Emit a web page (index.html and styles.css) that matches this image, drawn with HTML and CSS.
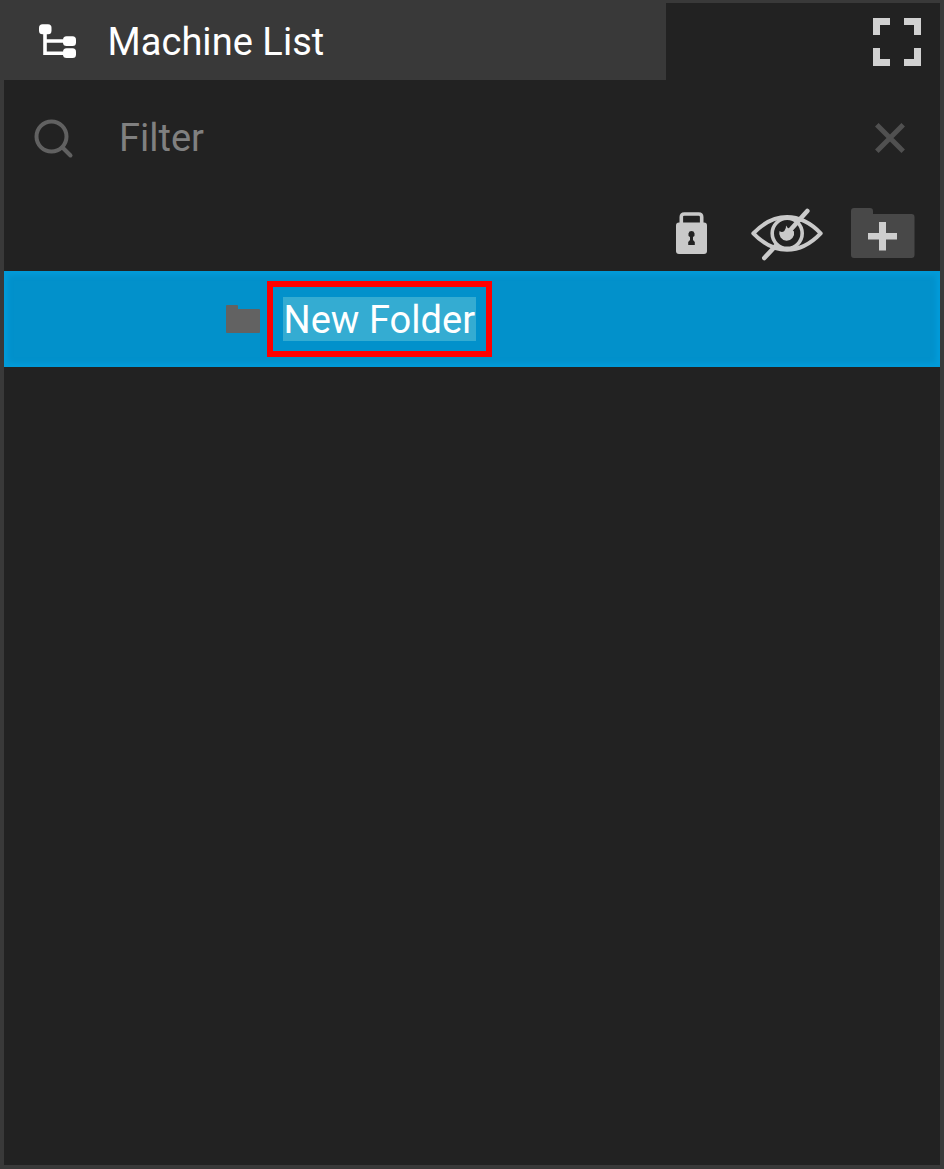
FILE: index.html
```html
<!DOCTYPE html>
<html lang="en">
<head>
<meta charset="utf-8">
<title>Machine List</title>
<link rel="stylesheet" href="styles.css">
</head>
<body>
<main class="panel">
  <header class="header">
    <div class="tab">
      <svg class="tree-icon" width="38" height="36" viewBox="0 0 38 36" fill="#fff">
        <path d="M6 8V30.300H24M6 18H24" fill="none" stroke="#fff" stroke-width="3.600"/>
        <rect x="0" y="1.300" width="12.500" height="10" rx="3.500"/>
        <rect x="24" y="13.300" width="13" height="9.700" rx="3.500"/>
        <rect x="24" y="25.300" width="13" height="9.700" rx="3.500"/>
      </svg>
      <span class="tab-title">Machine List</span>
    </div>
    <svg class="expand-icon" width="48" height="48" viewBox="0 0 48 48" fill="#d1d1d1">
      <path d="M0 0H17V7H7V17H0ZM31 0H48V17H41V7H31ZM0 30H7V41H17V48H0ZM41 30H48V48H31V41H41Z"/>
    </svg>
  </header>
  <div class="filter">
    <svg class="search-icon" width="40" height="40" viewBox="0 0 40 40" fill="none" stroke="#616161" stroke-width="4">
      <circle cx="17.500" cy="17.500" r="15"/>
      <path d="M28.500 28.500L36.500 36.500" stroke-linecap="round"/>
    </svg>
    <span class="filter-label">Filter</span>
    <svg class="clear-icon" width="30" height="30" viewBox="0 0 30 30" fill="none" stroke="#505050" stroke-width="5">
      <path d="M1.800 1.800L28.200 28.200M28.200 1.800L1.800 28.200"/>
    </svg>
  </div>
  <div class="toolbar">
    <svg class="lock-icon" width="31" height="43" viewBox="0 0 31 43">
      <path d="M5.300 14V5Q5.300 2 8.300 2H22.700Q25.700 2 25.700 5V14" fill="none" stroke="#c9c9c9" stroke-width="3.600"/>
      <rect y="10.500" width="31" height="31.500" rx="3" fill="#c9c9c9"/>
      <path d="M15.500 19A3.200 3.200 0 0 1 17 25L17 28L18.800 30V33H12.200V30L14 28V25A3.200 3.200 0 0 1 15.500 19Z" fill="#222"/>
    </svg>
    <svg class="eye-icon" width="72" height="54" viewBox="0 0 72 54" fill="none" stroke="#cacaca">
      <path d="M2.300 25.300Q18 9 36 9T69.700 25.300Q54 41.700 36 41.700T2.300 25.300Z" stroke-width="4" stroke-linejoin="round"/>
      <circle cx="36.200" cy="25.300" r="15" stroke-width="3.600"/>
      <path d="M35 17.500L36.800 20L40 21L43 23.500A7.500 7.500 0 1 1 28.500 23Q31 25 33.300 23Q35.500 20.500 35 17.500Z" fill="#cacaca" stroke="none"/>
      <path d="M56.300 3L38 23.500M25 37.500L13.300 50" stroke-width="4.600" stroke-linecap="round"/>
    </svg>
    <svg class="add-folder-icon" width="64" height="51" viewBox="0 0 64 51">
      <path d="M3 0H19Q22 0 22 3V6H60.500Q63.500 6 63.500 9V47Q63.500 50 60.500 50H3Q0 50 0 47V3Q0 0 3 0Z" fill="#484848"/>
      <path d="M28 14H35V25H46V31.500H35V42.500H28V31.500H17V25H28Z" fill="#cecece"/>
    </svg>
  </div>
  <div class="row">
    <svg class="folder-icon" width="34" height="28" viewBox="0 0 34 28" fill="#626262">
      <path d="M1 0H11Q12 0 12 1V4H33Q34 4 34 5V27Q34 28 33 28H1Q0 28 0 27V1Q0 0 1 0Z"/>
    </svg>
    <div class="name-box"><span class="name-selected">New Folder</span></div>
  </div>
</main>
</body>
</html>
```
FILE: styles.css
```css
* {
  box-sizing: border-box;
}

body {
  margin: 0;
  font-family: Roboto, sans-serif;
  font-size: 38px;
  line-height: 44px;
  color: #fff;
  background: #393939;
}

svg {
  display: block;
  flex: none;
}

.panel {
  height: 1169px;
  border: solid #393939;
  border-width: 3px 4px 4px;
  background: #222;
}

.header {
  display: flex;
  justify-content: space-between;
  height: 77px;
  padding-right: 19px;
}

.tab {
  display: flex;
  align-items: flex-start;
  width: 662px;
  padding-left: 35px;
  background: #393939;
}

.tree-icon {
  margin-top: 20px;
}

.tab-title {
  margin: 17px 0 0 30.500px;
  letter-spacing: 0.05px;
  white-space: nowrap;
}

.expand-icon {
  margin-top: 15px;
}

.filter {
  display: flex;
  align-items: flex-start;
  height: 110px;
  padding: 35px 35px 0 30px;
}

.search-icon {
  margin-top: 4px;
}

.filter-label {
  margin: 1px 0 0 45px;
  color: #808080;
}

.clear-icon {
  margin: 8px 0 0 auto;
}

.toolbar {
  display: flex;
  justify-content: flex-end;
  align-items: flex-start;
  height: 81px;
  padding: 18px 25px 0 0;
}

.lock-icon {
  margin: 4px 44px 0 0;
}

.eye-icon {
  margin-right: 28px;
}

.row {
  display: flex;
  align-items: flex-start;
  height: 96px;
  padding: 10px 0 0 222px;
  background: #0291cb;
  box-shadow: inset 0 0 5px 4px #029bd9;
}

.folder-icon {
  margin-top: 24px;
}

.name-box {
  width: 225px;
  height: 76px;
  margin-left: 7px;
  padding: 10px;
  border: 6px solid #f00;
}

.name-selected {
  display: block;
  width: 193px;
  height: 44px;
  padding-left: 0.500px;
  line-height: 46px;
  letter-spacing: 0.05px;
  white-space: nowrap;
  background: #34acd2;
}
```
